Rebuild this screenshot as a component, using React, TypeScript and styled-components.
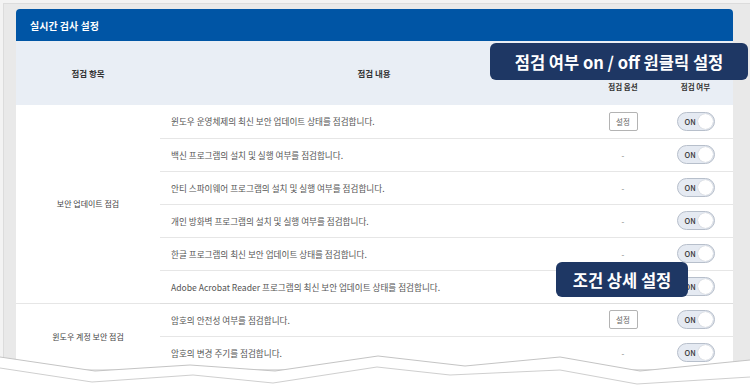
import styled, { createGlobalStyle } from 'styled-components';

const GlobalStyle = createGlobalStyle`
    html, body {
        margin: 0;
        padding: 0;
        background: #f3f3f3;
        overflow: hidden;
    }
    * {
        box-sizing: border-box;
    }
`;

const Frame = styled.div`
    position: relative;
    width: 750px;
    height: 385px;
    overflow: hidden;
    padding: 3px 0 0 3px;
    font-family: 'Noto Sans CJK KR', 'Noto Sans', sans-serif;
`;

const Backdrop = styled.div`
    height: 100%;
    background: #e9e9e9;
    border-left: 1px solid #dcdcdc;
    border-top: 1px solid #dcdcdc;
    padding: 5px 17px 0 12px;
`;

const Panel = styled.div`
    background: #ffffff;
    border-radius: 4px 4px 0 0;
`;

const TitleBar = styled.div`
    display: flex;
    align-items: center;
    height: 32px;
    padding-left: 14px;
    background: #0055a5;
    border-radius: 4px 4px 0 0;
    color: #ffffff;
    font-size: 10px;
    font-weight: 700;
`;

const Table = styled.table`
    width: 100%;
    border-collapse: collapse;
    table-layout: fixed;
`;

const HeadCell = styled.th<{ $h?: number; $small?: boolean }>`
    height: ${(p) => (p.$h ? `${p.$h}px` : 'auto')};
    padding: 0;
    background: #e9eef5;
    color: #333333;
    font-size: ${(p) => (p.$small ? '7.5px' : '8.5px')};
    font-weight: 700;
    text-align: center;
    vertical-align: middle;
`;

const GroupCell = styled.td`
    padding: 0;
    border-bottom: 1px solid #dedede;
    color: #444444;
    font-size: 8px;
    text-align: center;
    vertical-align: middle;
`;

const Cell = styled.td<{ $center?: boolean }>`
    height: 33px;
    padding: ${(p) => (p.$center ? '0' : '0 0 0 11px')};
    border-bottom: 1px solid #e6e6e6;
    color: #555555;
    font-size: 8.6px;
    text-align: ${(p) => (p.$center ? 'center' : 'left')};
    vertical-align: middle;
    white-space: nowrap;
`;

const Row = styled.tr<{ $groupEnd?: boolean }>`
    & > td {
        border-bottom-color: ${(p) => (p.$groupEnd ? '#dedede' : '#e6e6e6')};
    }
`;

const OptionButton = styled.button`
    width: 29px;
    height: 19px;
    padding: 0;
    border: 1px solid #b3b3b3;
    border-radius: 2px;
    background: #ffffff;
    color: #666666;
    font-family: inherit;
    font-size: 7.5px;
    line-height: 1;
`;

const Dash = styled.span`
    color: #777777;
    font-size: 8px;
`;

const Toggle = styled.span`
    position: relative;
    display: inline-flex;
    align-items: center;
    width: 38px;
    height: 19px;
    padding-left: 7px;
    border: 1px solid #b7bfcb;
    border-radius: 10px;
    background: #e5eaf2;
    color: #333333;
    font-size: 7.5px;
    font-weight: 500;
    vertical-align: middle;
`;

const Knob = styled.span`
    position: absolute;
    right: 1px;
    top: 1px;
    width: 15px;
    height: 15px;
    border-radius: 50%;
    background: #ffffff;
    box-shadow: 0 0 1px rgba(0, 0, 0, 0.25);
`;

const Callout = styled.div<{ $x: number; $y: number; $w: number; $h: number }>`
    position: absolute;
    left: ${(p) => p.$x}px;
    top: ${(p) => p.$y}px;
    width: ${(p) => p.$w}px;
    height: ${(p) => p.$h}px;
    display: flex;
    align-items: center;
    justify-content: center;
    border-radius: 6px;
    background: #1e3764;
    color: #ffffff;
    font-size: 16.5px;
    font-weight: 700;
    white-space: nowrap;
`;

const Tear = styled.svg`
    position: absolute;
    left: 0;
    bottom: 0;
    width: 750px;
    height: 40px;
`;

type Item = { text: string; option: boolean };

const groups: { name: string; items: Item[] }[] = [
    {
        name: '보안 업데이트 점검',
        items: [
            { text: '윈도우 운영체제의 최신 보안 업데이트 상태를 점검합니다.', option: true },
            { text: '백신 프로그램의 설치 및 실행 여부를 점검합니다.', option: false },
            { text: '안티 스파이웨어 프로그램의 설치 및 실행 여부를 점검합니다.', option: false },
            { text: '개인 방화벽 프로그램의 설치 및 실행 여부를 점검합니다.', option: false },
            { text: '한글 프로그램의 최신 보안 업데이트 상태를 점검합니다.', option: false },
            { text: 'Adobe Acrobat Reader 프로그램의 최신 보안 업데이트 상태를 점검합니다.', option: false },
        ],
    },
    {
        name: '윈도우 계정 보안 점검',
        items: [
            { text: '암호의 안전성 여부를 점검합니다.', option: true },
            { text: '암호의 변경 주기를 점검합니다.', option: false },
        ],
    },
];

// y offsets are relative to the svg top (page y 345)
const upper = '0,12 95,26 190,20 275,26 378,11 465,21 560,12 640,26 750,15';
const lower = '0,23 92,37 193,30 273,38 377,22 450,30 560,25 637,39 750,32';

const App = () => {
    return (
        <>
            <GlobalStyle />
            <Frame>
                <Backdrop>
                    <Panel>
                        <TitleBar>실시간 검사 설정</TitleBar>
                        <Table>
                            <colgroup>
                                <col style={{ width: 144 }} />
                                <col />
                                <col style={{ width: 70 }} />
                                <col style={{ width: 75 }} />
                            </colgroup>
                            <thead>
                                <tr>
                                    <HeadCell rowSpan={2}>점검 항목</HeadCell>
                                    <HeadCell rowSpan={2}>점검 내용</HeadCell>
                                    <HeadCell colSpan={2} $h={27} />
                                </tr>
                                <tr>
                                    <HeadCell $h={37} $small>점검 옵션</HeadCell>
                                    <HeadCell $h={37} $small>점검 여부</HeadCell>
                                </tr>
                            </thead>
                            <tbody>
                                {groups.map((g) =>
                                    g.items.map((item, i) => (
                                        <Row key={g.name + i} $groupEnd={i === g.items.length - 1}>
                                            {i === 0 && <GroupCell rowSpan={g.items.length}>{g.name}</GroupCell>}
                                            <Cell>{item.text}</Cell>
                                            <Cell $center>
                                                {item.option ? <OptionButton>설정</OptionButton> : <Dash>-</Dash>}
                                            </Cell>
                                            <Cell $center>
                                                <Toggle>
                                                    ON
                                                    <Knob />
                                                </Toggle>
                                            </Cell>
                                        </Row>
                                    ))
                                )}
                            </tbody>
                        </Table>
                    </Panel>
                </Backdrop>

                <Callout $x={490} $y={43} $w={258} $h={37}>
                    점검 여부 on / off 원클릭 설정
                </Callout>
                <Callout $x={556} $y={262} $w={132} $h={35}>
                    조건 상세 설정
                </Callout>

                <Tear viewBox="0 0 750 40" preserveAspectRatio="none">
                    <polygon points={`${upper} 750,40 0,40`} fill="#ffffff" />
                    <polyline points={upper} fill="none" stroke="#c4c4c4" strokeWidth="1" />
                    <polyline points={lower} fill="none" stroke="#cfcfcf" strokeWidth="1" />
                </Tear>
            </Frame>
        </>
    );
};

export default App;
